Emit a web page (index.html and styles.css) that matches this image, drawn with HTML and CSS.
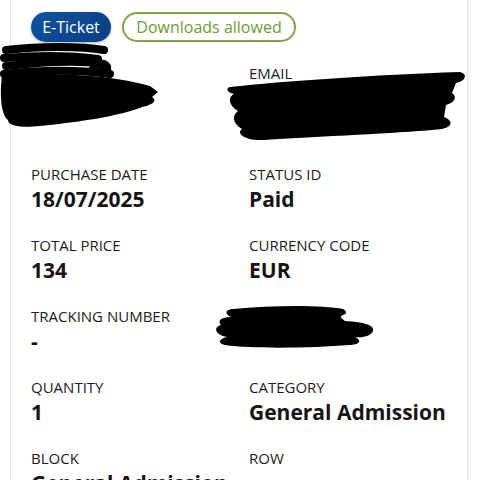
FILE: index.html
```html
<!DOCTYPE html>
<html lang="en">
<head>
<meta charset="utf-8">
<title>Ticket details</title>
<link rel="stylesheet" href="styles.css">
</head>
<body>
<div class="card">
  <div class="badges">
    <span class="badge badge-eticket">E-Ticket</span>
    <span class="badge badge-download">Downloads allowed</span>
  </div>
  <div class="grid">
    <div class="field redacted">
      <div class="label hidden">NAME</div>
      <div class="value">Xxxxx</div>
      <svg class="scribble scribble-name" width="170" height="95" viewBox="0 0 170 95">
        <g fill="none" stroke="#000" stroke-linecap="round" stroke-width="8">
          <path d="M6 10 C40 6 80 6 104 10"/>
          <path d="M4 18 C40 15 70 15 98 19"/>
          <path d="M6 26 C40 22 80 20 104 24 C112 28 104 34 92 30"/>
          <path d="M4 34 C40 30 80 30 110 34"/>
        </g>
        <path fill="#000" d="M2 36 C50 32 110 34 150 46 L158 52 L152 57 C158 61 152 65 142 67 C120 76 80 82 40 86 C20 88 8 86 8 80 C0 74 0 50 2 36 Z"/>
      </svg>
    </div>
    <div class="field redacted">
      <div class="label">EMAIL</div>
      <div class="value">xxxxxxx<br>xxxxx</div>
      <svg class="scribble scribble-email" width="245" height="75" viewBox="0 0 245 75">
        <path fill="#000" d="M6 18 C60 12 150 6 236 3 C244 5 242 12 232 14 L228 24 C234 28 230 34 222 36 L220 48 C230 52 228 58 218 60 C180 64 120 66 40 71 C20 72 12 64 18 60 C8 54 8 46 14 42 C4 36 4 28 10 25 C2 23 2 19 6 18 Z"/>
      </svg>
    </div>

    <div class="field">
      <div class="label">PURCHASE DATE</div>
      <div class="value">18/07/2025</div>
    </div>
    <div class="field">
      <div class="label">STATUS ID</div>
      <div class="value">Paid</div>
    </div>

    <div class="field">
      <div class="label">TOTAL PRICE</div>
      <div class="value">134</div>
    </div>
    <div class="field">
      <div class="label">CURRENCY CODE</div>
      <div class="value">EUR</div>
    </div>

    <div class="field">
      <div class="label">TRACKING NUMBER</div>
      <div class="value">-</div>
    </div>
    <div class="field redacted">
      <div class="label hidden">&nbsp;</div>
      <div class="value">&nbsp;</div>
      <svg class="scribble scribble-track" width="165" height="46" viewBox="0 0 165 46">
        <path fill="#000" d="M20 4 C60 0 110 0 130 4 C134 6 134 9 130 10 C125 12 130 14 132 16 C150 17 162 20 160 26 C158 31 150 33 142 32 C150 36 146 40 136 40 C100 43 40 44 12 40 C4 38 6 34 14 32 C2 30 0 22 8 20 C4 16 8 12 18 12 C10 8 14 4 20 4 Z"/>
      </svg>
    </div>

    <div class="field">
      <div class="label">QUANTITY</div>
      <div class="value">1</div>
    </div>
    <div class="field">
      <div class="label">CATEGORY</div>
      <div class="value">General Admission</div>
    </div>

    <div class="field">
      <div class="label">BLOCK</div>
      <div class="value">General Admission</div>
    </div>
    <div class="field">
      <div class="label">ROW</div>
      <div class="value">&nbsp;</div>
    </div>
  </div>
</div>
</body>
</html>
```
FILE: styles.css
```css
html, body {
  margin: 0;
  padding: 0;
  background: #ffffff;
  height: 480px;
  overflow: hidden;
}

body {
  font-family: "Open Sans", "Noto Sans", sans-serif;
  color: #141414;
}

.card {
  margin-left: 10px;
  width: 417px;
  background: #ffffff;
  border-left: 1px solid #e6e6e6;
  border-right: 1px solid #e2e2e2;
  padding: 12px 19px 0 20px;
  min-height: 480px;
  box-shadow: 2px 0 3px rgba(0, 0, 0, 0.05);
}

.badges {
  display: flex;
  gap: 11px;
}

.badge {
  display: inline-flex;
  align-items: center;
  justify-content: center;
  height: 30px;
  box-sizing: border-box;
  border-radius: 15px;
  font-size: 16px;
}

.badge-eticket {
  width: 80px;
  color: #ffffff;
  background: linear-gradient(135deg, #11529f 0%, #0a3f84 100%);
  box-shadow: 0 1px 3px rgba(10, 50, 110, 0.35);
}

.badge-download {
  width: 174px;
  color: #6f9a3a;
  border: 2px solid #7ea644;
  background: #fff;
}

.grid {
  display: grid;
  grid-template-columns: 218px 1fr;
  row-gap: 21px;
  margin-top: 21px;
}

.field {
  position: relative;
}

.label {
  font-size: 15px;
  line-height: 20px;
  color: #1c1c1c;
  white-space: nowrap;
}

.value {
  font-size: 21px;
  line-height: 30px;
  font-weight: 700;
  color: #151515;
  white-space: nowrap;
}

.redacted .value,
.label.hidden {
  color: transparent;
}

.scribble {
  position: absolute;
  display: block;
}

.scribble-name {
  left: -31px;
  top: -23px;
}

.scribble-email {
  left: -25px;
  top: 6px;
}

.scribble-track {
  left: -36px;
  top: -1px;
}
```
